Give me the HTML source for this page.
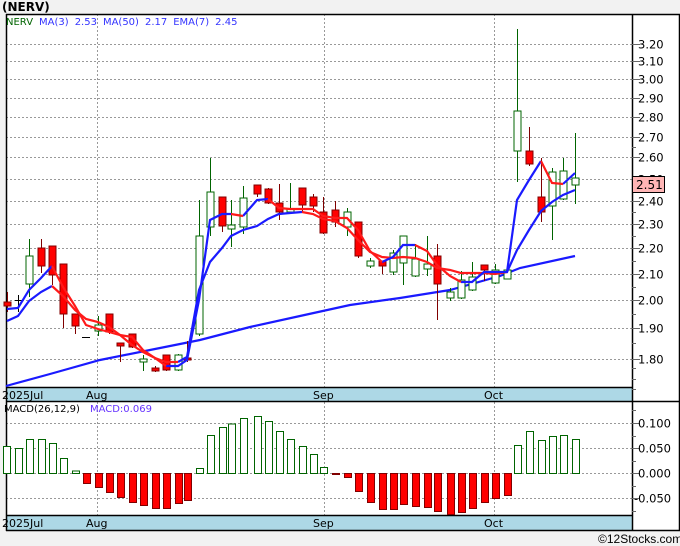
<!DOCTYPE html>
<html><head><meta charset="utf-8"><style>
html,body{margin:0;padding:0;background:#f2f2f2;width:680px;height:546px;overflow:hidden}
svg{display:block;font-family:"DejaVu Sans","Liberation Sans",sans-serif}
</style></head><body>
<svg width="680" height="546" viewBox="0 0 680 546">
<rect x="0" y="0" width="680" height="546" fill="#f2f2f2"/>
<text x="2" y="11" font-size="12" font-weight="bold" fill="#000">(NERV)</text>
<rect x="6" y="14" width="673" height="517" fill="#fff"/>
<!-- grid -->
<g stroke="#999" stroke-width="1" stroke-dasharray="2,2">
<line x1="6" x2="632" y1="44.5" y2="44.5"/><line x1="6" x2="632" y1="61.5" y2="61.5"/><line x1="6" x2="632" y1="79.5" y2="79.5"/><line x1="6" x2="632" y1="98.5" y2="98.5"/><line x1="6" x2="632" y1="117.5" y2="117.5"/><line x1="6" x2="632" y1="137.5" y2="137.5"/><line x1="6" x2="632" y1="157.5" y2="157.5"/><line x1="6" x2="632" y1="179.5" y2="179.5"/><line x1="6" x2="632" y1="201.5" y2="201.5"/><line x1="6" x2="632" y1="224.5" y2="224.5"/><line x1="6" x2="632" y1="248.5" y2="248.5"/><line x1="6" x2="632" y1="274.5" y2="274.5"/><line x1="6" x2="632" y1="300.5" y2="300.5"/><line x1="6" x2="632" y1="328.5" y2="328.5"/><line x1="6" x2="632" y1="359.5" y2="359.5"/>
<line x1="6" x2="632" y1="423.5" y2="423.5"/><line x1="6" x2="632" y1="448.5" y2="448.5"/><line x1="6" x2="632" y1="473.5" y2="473.5"/><line x1="6" x2="632" y1="498.5" y2="498.5"/>
<line x1="97.5" x2="97.5" y1="14" y2="531"/><line x1="324.5" x2="324.5" y1="14" y2="531"/><line x1="494.5" x2="494.5" y1="14" y2="531"/>
</g>
<!-- bands -->
<rect x="6" y="387" width="626" height="14" fill="#add8e6"/>
<rect x="6" y="515" width="626" height="15" fill="#add8e6"/>
<g stroke="#000" stroke-width="1.5" fill="none">
<line x1="6" x2="680" y1="14.5" y2="14.5"/>
<line x1="6.5" x2="6.5" y1="14" y2="531"/>
<line x1="632.5" x2="632.5" y1="14" y2="531"/>
<line x1="679.5" x2="679.5" y1="14" y2="531"/>
<line x1="6" x2="632" y1="387.5" y2="387.5"/>
<line x1="6" x2="680" y1="401.5" y2="401.5"/>
<line x1="6" x2="632" y1="515.5" y2="515.5"/>
<line x1="6" x2="680" y1="530.5" y2="530.5"/>
</g>
<g font-size="11" fill="#000">
<text x="2" y="399">2025Jul</text><text x="86" y="399">Aug</text><text x="313" y="399">Sep</text><text x="484" y="399">Oct</text>
<text x="2" y="527">2025Jul</text><text x="86" y="527">Aug</text><text x="313" y="527">Sep</text><text x="484" y="527">Oct</text>
</g>
<!-- axis ticks -->
<g stroke="#666" stroke-width="1">
<line x1="632" x2="640" y1="44.5" y2="44.5"/><line x1="632" x2="640" y1="61.5" y2="61.5"/><line x1="632" x2="640" y1="79.5" y2="79.5"/><line x1="632" x2="640" y1="98.5" y2="98.5"/><line x1="632" x2="640" y1="117.5" y2="117.5"/><line x1="632" x2="640" y1="137.5" y2="137.5"/><line x1="632" x2="640" y1="157.5" y2="157.5"/><line x1="632" x2="640" y1="201.5" y2="201.5"/><line x1="632" x2="640" y1="224.5" y2="224.5"/><line x1="632" x2="640" y1="248.5" y2="248.5"/><line x1="632" x2="640" y1="274.5" y2="274.5"/><line x1="632" x2="640" y1="300.5" y2="300.5"/><line x1="632" x2="640" y1="328.5" y2="328.5"/><line x1="632" x2="640" y1="359.5" y2="359.5"/>
<line x1="632" x2="636" y1="147.5" y2="147.5"/><line x1="632" x2="636" y1="212.5" y2="212.5"/><line x1="632" x2="636" y1="236.5" y2="236.5"/><line x1="632" x2="636" y1="261.5" y2="261.5"/><line x1="632" x2="636" y1="287.5" y2="287.5"/><line x1="632" x2="636" y1="314.5" y2="314.5"/><line x1="632" x2="636" y1="343.5" y2="343.5"/><line x1="632" x2="636" y1="368.5" y2="368.5"/><line x1="632" x2="636" y1="379.5" y2="379.5"/><line x1="632" x2="636" y1="389.5" y2="389.5"/>
<line x1="632" x2="640" y1="423.5" y2="423.5"/><line x1="632" x2="640" y1="448.5" y2="448.5"/><line x1="632" x2="640" y1="473.5" y2="473.5"/><line x1="632" x2="640" y1="498.5" y2="498.5"/>
<line x1="632" x2="636" y1="410.5" y2="410.5"/><line x1="632" x2="636" y1="436.5" y2="436.5"/><line x1="632" x2="636" y1="461.5" y2="461.5"/><line x1="632" x2="636" y1="486.5" y2="486.5"/><line x1="632" x2="636" y1="511.5" y2="511.5"/>
</g>
<g font-size="11.5" fill="#000">
<text x="638" y="48.5">3.20</text><text x="638" y="65.5">3.10</text><text x="638" y="83.5">3.00</text><text x="638" y="102.5">2.90</text><text x="638" y="121.5">2.80</text><text x="638" y="141.5">2.70</text><text x="638" y="161.5">2.60</text><text x="638" y="183.5">2.50</text><text x="638" y="205.5">2.40</text><text x="638" y="228.5">2.30</text><text x="638" y="252.5">2.20</text><text x="638" y="278.5">2.10</text><text x="638" y="304.5">2.00</text><text x="638" y="332.5">1.90</text><text x="638" y="363.5">1.80</text>
<text x="638" y="427.5">0.100</text><text x="638" y="452.5">0.050</text><text x="638" y="477.5">0.000</text><text x="634" y="502.5">-0.050</text>
</g>
<rect x="632.5" y="176.5" width="32" height="16" fill="#ffb6b6" stroke="#000"/>
<text x="636" y="189" font-size="12" fill="#000">2.51</text>
<!-- legends -->
<text x="6" y="25" font-size="10"><tspan fill="#006400">NERV</tspan><tspan fill="#3333ff" dx="6">MA(3)</tspan><tspan fill="#3333ff" dx="6">2.53</tspan><tspan fill="#3333ff" dx="6">MA(50)</tspan><tspan fill="#3333ff" dx="6">2.17</tspan><tspan fill="#3333ff" dx="6">EMA(7)</tspan><tspan fill="#3333ff" dx="6">2.45</tspan></text>
<text x="4" y="412" font-size="10"><tspan fill="#000">MACD(26,12,9)</tspan><tspan fill="#6633ff" dx="10">MACD:0.069</tspan></text>
<!-- MA50 -->
<polyline fill="none" stroke="#1a1aff" stroke-width="2.2" points="6,386 50,374 100,360 150,350 200,340 250,327 300,316 350,305 400,298 450,290 500,276 520,268 575,256"/>
<!-- candles -->
<g stroke-width="1">
<g stroke="#800000" fill="#ff0000">
<line x1="7.5" x2="7.5" y1="292" y2="312"/><rect x="4" y="302" width="7" height="4"/>
<line x1="41.5" x2="41.5" y1="239" y2="273"/><rect x="38" y="248" width="7" height="18"/>
<line x1="52.5" x2="52.5" y1="246" y2="285"/><rect x="49" y="246" width="7" height="29"/>
<line x1="63.5" x2="63.5" y1="264" y2="328"/><rect x="60" y="264" width="7" height="50"/>
<line x1="75.5" x2="75.5" y1="314" y2="334"/><rect x="72" y="314" width="7" height="12"/>
<line x1="109.5" x2="109.5" y1="314" y2="334"/><rect x="106" y="314" width="7" height="18"/>
<line x1="120.5" x2="120.5" y1="343" y2="362"/><rect x="117" y="343" width="7" height="3"/>
<line x1="132.5" x2="132.5" y1="334" y2="348"/><rect x="129" y="334" width="7" height="13"/>
<line x1="155.5" x2="155.5" y1="366" y2="372"/><rect x="152" y="368" width="7" height="3"/>
<line x1="166.5" x2="166.5" y1="355" y2="371"/><rect x="163" y="355" width="7" height="15"/>
<line x1="187.5" x2="187.5" y1="341" y2="362"/><rect x="184" y="358" width="7" height="2"/>
<line x1="222.5" x2="222.5" y1="197" y2="232"/><rect x="219" y="197" width="7" height="29"/>
<line x1="257.5" x2="257.5" y1="185" y2="197"/><rect x="254" y="185" width="7" height="9"/>
<line x1="268.5" x2="268.5" y1="188" y2="204"/><rect x="265" y="189" width="7" height="14"/>
<line x1="279.5" x2="279.5" y1="184" y2="220"/><rect x="276" y="203" width="7" height="9"/>
<line x1="302.5" x2="302.5" y1="188" y2="212"/><rect x="299" y="188" width="7" height="17"/>
<line x1="313.5" x2="313.5" y1="194" y2="212"/><rect x="310" y="197" width="7" height="9"/>
<line x1="323.5" x2="323.5" y1="197" y2="234"/><rect x="320" y="212" width="7" height="21"/>
<line x1="335.5" x2="335.5" y1="201" y2="227"/><rect x="332" y="210" width="7" height="12"/>
<line x1="358.5" x2="358.5" y1="222" y2="258"/><rect x="355" y="222" width="7" height="34"/>
<line x1="382.5" x2="382.5" y1="261" y2="274"/><rect x="379" y="261" width="7" height="5"/>
<line x1="437.5" x2="437.5" y1="244" y2="320"/><rect x="434" y="256" width="7" height="28"/>
<line x1="484.5" x2="484.5" y1="265" y2="281"/><rect x="481" y="265" width="7" height="5"/>
<line x1="529.5" x2="529.5" y1="127" y2="166"/><rect x="526" y="151" width="7" height="13"/>
<line x1="541.5" x2="541.5" y1="158" y2="222"/><rect x="538" y="197" width="7" height="15"/>
</g>
<g stroke="#000"><line x1="18.5" x2="18.5" y1="295" y2="312"/><line x1="15" x2="22" y1="300.5" y2="300.5"/><line x1="82" x2="90" y1="337.5" y2="337.5"/></g>
<g stroke="#006400" fill="#fff">
<line x1="29.5" x2="29.5" y1="239" y2="297"/><rect x="26" y="256" width="7" height="28"/>
<line x1="98.5" x2="98.5" y1="316" y2="336"/><rect x="95" y="325" width="7" height="6"/>
<line x1="143.5" x2="143.5" y1="355" y2="371"/><rect x="140" y="359" width="7" height="3"/>
<line x1="178.5" x2="178.5" y1="354" y2="371"/><rect x="175" y="355" width="7" height="15"/>
<line x1="199.5" x2="199.5" y1="200" y2="336"/><rect x="196" y="236" width="7" height="98"/>
<line x1="210.5" x2="210.5" y1="158" y2="236"/><rect x="207" y="192" width="7" height="35"/>
<line x1="231.5" x2="231.5" y1="200" y2="247"/><rect x="228" y="225" width="7" height="4"/>
<line x1="243.5" x2="243.5" y1="186" y2="234"/><rect x="240" y="198" width="7" height="29"/>
<line x1="290.5" x2="290.5" y1="183" y2="212"/><rect x="287" y="209" width="7" height="3"/>
<line x1="347.5" x2="347.5" y1="208" y2="236"/><rect x="344" y="212" width="7" height="15"/>
<line x1="370.5" x2="370.5" y1="258" y2="268"/><rect x="367" y="261" width="7" height="5"/>
<line x1="393.5" x2="393.5" y1="250" y2="275"/><rect x="390" y="253" width="7" height="19"/>
<line x1="403.5" x2="403.5" y1="236" y2="285"/><rect x="400" y="236" width="7" height="27"/>
<line x1="415.5" x2="415.5" y1="244" y2="277"/><rect x="412" y="259" width="7" height="17"/>
<line x1="427.5" x2="427.5" y1="236" y2="276"/><rect x="424" y="264" width="7" height="5"/>
<line x1="450.5" x2="450.5" y1="288" y2="301"/><rect x="447" y="292" width="7" height="6"/>
<line x1="461.5" x2="461.5" y1="271" y2="299"/><rect x="458" y="280" width="7" height="18"/>
<line x1="472.5" x2="472.5" y1="262" y2="291"/><rect x="469" y="277" width="7" height="13"/>
<line x1="495.5" x2="495.5" y1="264" y2="284"/><rect x="492" y="270" width="7" height="13"/>
<line x1="507.5" x2="507.5" y1="264" y2="279"/><rect x="504" y="270" width="7" height="9"/>
<line x1="517.5" x2="517.5" y1="29" y2="182"/><rect x="514" y="111" width="7" height="40"/>
<line x1="552.5" x2="552.5" y1="168" y2="240"/><rect x="549" y="172" width="7" height="34"/>
<line x1="563.5" x2="563.5" y1="158" y2="200"/><rect x="560" y="171" width="7" height="28"/>
<line x1="575.5" x2="575.5" y1="133" y2="204"/><rect x="572" y="178" width="7" height="7"/>
</g>
</g>
<!-- EMA7 -->
<path fill="none" stroke="#1a1aff" stroke-width="2.2" d="M7,321 L18,316 29,301 41,292 52,286 M178,362 L187,357 199,290 210,262 222,248 231,236 243,230 257,226 268,219 279,214 290,213 302,212 M507,272 L517,250 529,230 541,211 552,202 563,195 575,190"/>
<path fill="none" stroke="#ff1a1a" stroke-width="2.2" d="M52,286 L63,296 75,310 86,319 98,322 109,327 120,335 132,345 143,352 155,358 166,362 178,362 M302,212 L313,214 323,219 335,221 347,228 358,240 370,252 382,257 393,258 403,257 415,258 427,262 437,268 450,270 461,273 472,273 484,273 495,274 507,272"/>
<!-- MA3 -->
<path fill="none" stroke="#1a1aff" stroke-width="2.2" d="M7,309 L18,308 29,290 41,278 52,266 M166,366 L178,366 187,360 199,300 210,220 222,214 231,214 M243,216 L257,200 268,199 M382,262 L393,257 403,245 415,245 M461,282 L472,282 484,272 495,272 507,272 517,200 529,180 541,161 M563,184 L575,173"/>
<path fill="none" stroke="#ff1a1a" stroke-width="2.2" d="M52,266 L63,287 75,306 86,325 98,329 109,332 120,335 132,337 143,350 155,358 166,366 M231,214 L243,216 M268,199 L279,208 290,209 302,209 313,209 323,216 335,218 347,218 358,230 370,251 382,262 M415,245 L427,251 437,265 450,276 461,282 M541,161 L552,183 563,184"/>
<!-- MACD -->
<g stroke="#006400" fill="#fff">
<rect x="3.5" y="446.5" width="7" height="27"/><rect x="15.5" y="448.5" width="7" height="25"/><rect x="26.5" y="439.5" width="7" height="34"/><rect x="38.5" y="439.5" width="7" height="34"/><rect x="49.5" y="443.5" width="7" height="30"/><rect x="60.5" y="458.5" width="7" height="15"/><rect x="72.5" y="471" width="7" height="2.5"/>
<rect x="196.5" y="468.5" width="7" height="5"/><rect x="207.5" y="435.5" width="7" height="38"/><rect x="219.5" y="427.5" width="7" height="46"/><rect x="228.5" y="424" width="7" height="49.5"/><rect x="240.5" y="418.5" width="7" height="55"/><rect x="254.5" y="416.5" width="7" height="57"/><rect x="265.5" y="421.5" width="7" height="52"/><rect x="276.5" y="431.5" width="7" height="42"/><rect x="287.5" y="439.5" width="7" height="34"/><rect x="299.5" y="446.5" width="7" height="27"/><rect x="310.5" y="454.5" width="7" height="19"/><rect x="320.5" y="467.5" width="7" height="6"/>
<rect x="514.5" y="445.5" width="7" height="28"/><rect x="526.5" y="431.5" width="7" height="42"/><rect x="538.5" y="440.5" width="7" height="33"/><rect x="549.5" y="436.5" width="7" height="37"/><rect x="560.5" y="435.5" width="7" height="38"/><rect x="572.5" y="439.5" width="7" height="34"/>
</g>
<g stroke="#800000" fill="#ff0000">
<rect x="83.5" y="473.5" width="7" height="10"/><rect x="95.5" y="473.5" width="7" height="14"/><rect x="106.5" y="473.5" width="7" height="19"/><rect x="117.5" y="473.5" width="7" height="24"/><rect x="129.5" y="473.5" width="7" height="29"/><rect x="140.5" y="473.5" width="7" height="32"/><rect x="152.5" y="473.5" width="7" height="35"/><rect x="163.5" y="473.5" width="7" height="35"/><rect x="175.5" y="473.5" width="7" height="30"/><rect x="184.5" y="473.5" width="7" height="27"/>
<rect x="332.5" y="473.5" width="7" height="1"/><rect x="344.5" y="473.5" width="7" height="4"/><rect x="355.5" y="473.5" width="7" height="18"/><rect x="367.5" y="473.5" width="7" height="29"/><rect x="379.5" y="473.5" width="7" height="36"/><rect x="390.5" y="473.5" width="7" height="36"/><rect x="400.5" y="473.5" width="7" height="31"/><rect x="412.5" y="473.5" width="7" height="33"/><rect x="424.5" y="473.5" width="7" height="34"/><rect x="434.5" y="473.5" width="7" height="38"/><rect x="447.5" y="473.5" width="7" height="41"/><rect x="458.5" y="473.5" width="7" height="39"/><rect x="469.5" y="473.5" width="7" height="35"/><rect x="481.5" y="473.5" width="7" height="29"/><rect x="492.5" y="473.5" width="7" height="25"/><rect x="504.5" y="473.5" width="7" height="22"/>
</g>
<text x="598" y="543" font-size="12" font-family="Liberation Sans, sans-serif" fill="#000">©12Stocks.com</text>
</svg>
</body></html>
